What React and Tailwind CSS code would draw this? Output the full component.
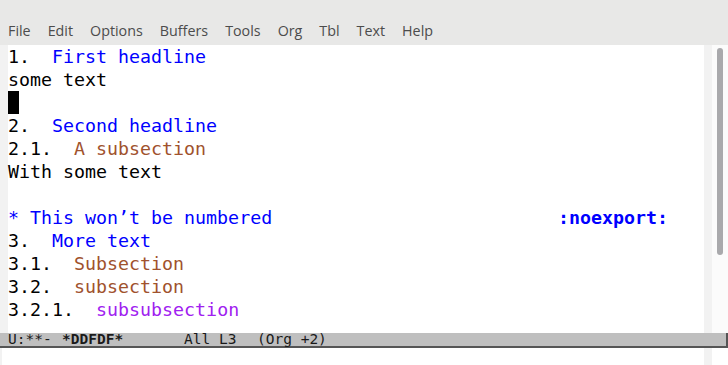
const menu = ["File", "Edit", "Options", "Buffers", "Tools", "Org", "Tbl", "Text", "Help"];

const mono = { fontFamily: "'DejaVu Sans Mono', monospace" };

function Line({ children }) {
  return <div className="h-[23px] leading-[23px] whitespace-pre">{children}</div>;
}

export default function App() {
  return (
    <div className="w-[728px] h-[365px] overflow-hidden bg-white flex flex-col">
      {/* menu bar */}
      <div
        className="h-[45px] bg-[#e8e8e7] flex items-end pb-[4px] pl-[8px] gap-[17px] text-[14.3px] text-[#4c4c4c]"
        style={{ fontFamily: "'Open Sans', sans-serif" }}
      >
        {menu.map((m) => (
          <span key={m} className="leading-[20px]">{m}</span>
        ))}
      </div>

      {/* buffer */}
      <div className="flex h-[288px]">
        <div className="w-[8px] bg-[#f2f2f2]" />
        <div className="flex-1 text-[18.3px] text-black" style={mono}>
          <Line>1.  <span className="text-[#0000ff]">First headline</span></Line>
          <Line>some text</Line>
          <Line><span className="inline-block w-[11px] h-[23px] bg-black align-top" /></Line>
          <Line>2.  <span className="text-[#0000ff]">Second headline</span></Line>
          <Line>2.1.  <span className="text-[#a0522d]">A subsection</span></Line>
          <Line>With some text</Line>
          <Line> </Line>
          <Line>
            <span className="flex text-[#0000ff]">
              <span className="w-[550px]">* This won’t be numbered</span>
              <span className="font-bold">:noexport:</span>
            </span>
          </Line>
          <Line>3.  <span className="text-[#0000ff]">More text</span></Line>
          <Line>3.1.  <span className="text-[#a0522d]">Subsection</span></Line>
          <Line>3.2.  <span className="text-[#a0522d]">subsection</span></Line>
          <Line>3.2.1.  <span className="text-[#a020f0]">subsubsection</span></Line>
        </div>
        <div className="w-[8px] bg-[#f2f2f2]" />
        <div className="w-[16px] bg-[#fbfbfb] pt-[3px] pl-[5px]">
          <div className="w-[6px] h-[207px] rounded-full bg-[#a9a9ac]" />
        </div>
      </div>

      {/* mode line */}
      <div
        className="h-[15px] bg-[#bfbfbf] border-b-[2px] border-r-[2px] border-[#555555] flex items-center pl-[8px] text-[14.5px] text-[#1a1a1a] whitespace-pre"
        style={mono}
      >
        <span className="w-[54px]">U:**-</span>
        <span className="w-[122px] font-bold">*DDFDF*</span>
        <span className="w-[73px]">All L3</span>
        <span>(Org +2)</span>
      </div>

      {/* echo area */}
      <div className="flex-1 flex">
        <div className="w-[2px] bg-[#f2f2f2]" />
        <div className="flex-1" />
        <div className="w-[8px] bg-[#f2f2f2]" />
        <div className="w-[16px]" />
      </div>
    </div>
  );
}
